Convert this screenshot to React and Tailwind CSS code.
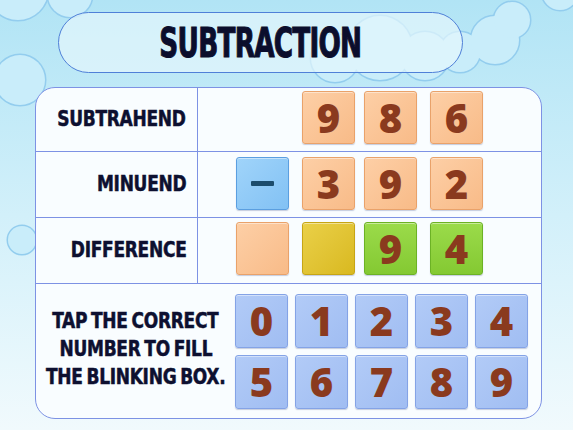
import React from "react";

const TILE_TONES = {
  peach: "bg-linear-to-br from-[#fdcfa6] to-[#f8bb88] border-[#e9a26a]",
  sky: "bg-linear-to-br from-[#a0d4fa] to-[#82c1f4] border-[#5b9fe0]",
  gold: "bg-linear-to-br from-[#ead047] to-[#d9b91e] border-[#c6a515]",
  lime: "bg-linear-to-b from-[#9bdb4a] to-[#84c932] border-[#6cb225]",
  pad: "bg-linear-to-br from-[#b2cbf7] to-[#a0bdf2] border-[#84a3e6]",
};

const Tile = ({ tone, children, className = "" }) => (
  <div
    className={`w-[53px] h-[53px] rounded-[3px] border flex items-center justify-center shadow-[0_1px_1px_rgba(40,60,120,0.25),inset_0_1px_0_rgba(255,255,255,0.45)] ${TILE_TONES[tone]} ${className}`}
  >
    {children}
  </div>
);

const Digit = ({ n }) => (
  <span className="font-['Open_Sans',sans-serif] font-extrabold text-[40px] leading-none text-[#8a3a1e]">
    {n}
  </span>
);

// condensed heavy caption font used for the row names
const Label = ({ children, className = "" }) => (
  <span
    className={`inline-block whitespace-nowrap font-['DejaVu_Sans_Condensed','DejaVu_Sans',sans-serif] font-bold text-[21px] tracking-[-0.3px] [word-spacing:-2px] text-[#0d1030] [-webkit-text-stroke:0.5px_#0d1030] scale-x-[0.9] ${className}`}
  >
    {children}
  </span>
);

const cloudDots = [
  [20, 80, 25],
  [18, -10, 30],
  [70, -5, 22],
  [22, 240, 14],
  [335, 58, 24],
  [380, 48, 32],
  [425, 56, 24],
  [460, 52, 20],
  [495, 40, 24],
  [512, 20, 18],
  [560, -8, 18],
];

const Clouds = () => (
  <svg className="absolute inset-0" width="573" height="430" viewBox="0 0 573 430">
    <g fill="none" stroke="#93cdee" strokeWidth="3">
      {cloudDots.map(([x, y, r], i) => (
        <circle key={i} cx={x} cy={y} r={r} />
      ))}
    </g>
    <g fill="#c9edfa">
      {cloudDots.map(([x, y, r], i) => (
        <circle key={i} cx={x} cy={y} r={r} />
      ))}
    </g>
  </svg>
);

export default function App() {
  const pad = [0, 1, 2, 3, 4, 5, 6, 7, 8, 9];

  return (
    <div className="relative w-[573px] h-[430px] overflow-hidden bg-linear-to-b from-[#b1e4f5] via-[#d2f0fa] to-[#f1fafd]">
      <Clouds />
      <div className="relative flex flex-col">
        <div className="ml-[58px] mt-[12px] w-[405px] h-[61px] rounded-full border border-[#4f80d8] bg-[#e4f6fc]/70 flex items-center justify-center">
          <h1 className="font-['DejaVu_Sans_Condensed','DejaVu_Sans',sans-serif] font-bold text-[40px] leading-none tracking-[-1px] text-[#0b0e2c] [-webkit-text-stroke:1px_#0b0e2c] scale-x-[0.73]">
            SUBTRACTION
          </h1>
        </div>

        <div className="ml-[35px] mt-[14px] w-[507px] h-[332px] rounded-[20px] border border-[#7d92e4] bg-[#f9fdff] flex flex-col overflow-hidden">
          <div className="flex h-[64px] border-b border-[#7d92e4]">
            <div className="w-[162px] border-r border-[#7d92e4] flex items-center justify-end pr-[11px]">
              <Label className="origin-right">SUBTRAHEND</Label>
            </div>
            <div className="flex items-start pt-[3px] pl-[104px]">
              <Tile tone="peach"><Digit n={9} /></Tile>
              <Tile tone="peach" className="ml-[9px]"><Digit n={8} /></Tile>
              <Tile tone="peach" className="ml-[13px]"><Digit n={6} /></Tile>
            </div>
          </div>

          <div className="flex h-[66px] border-b border-[#7d92e4]">
            <div className="w-[162px] border-r border-[#7d92e4] flex items-center justify-end pr-[11px]">
              <Label className="origin-right">MINUEND</Label>
            </div>
            <div className="flex items-start pt-[5px] pl-[38px]">
              <Tile tone="sky">
                <span className="w-[23px] h-[5px] rounded-[1px] bg-[#1c4c6c]" />
              </Tile>
              <Tile tone="peach" className="ml-[13px]"><Digit n={3} /></Tile>
              <Tile tone="peach" className="ml-[9px]"><Digit n={9} /></Tile>
              <Tile tone="peach" className="ml-[13px]"><Digit n={2} /></Tile>
            </div>
          </div>

          <div className="flex h-[66px] border-b border-[#7d92e4]">
            <div className="w-[162px] border-r border-[#7d92e4] flex items-center justify-end pr-[11px]">
              <Label className="origin-right">DIFFERENCE</Label>
            </div>
            <div className="flex items-start pt-[4px] pl-[38px]">
              <Tile tone="peach" />
              <Tile tone="gold" className="ml-[13px]" />
              <Tile tone="lime" className="ml-[9px]"><Digit n={9} /></Tile>
              <Tile tone="lime" className="ml-[13px]"><Digit n={4} /></Tile>
            </div>
          </div>

          <div className="flex flex-1 items-center">
            <div className="w-[199px] flex flex-col items-center leading-[28px] pb-[4px]">
              <Label>TAP THE CORRECT</Label>
              <Label>NUMBER TO FILL</Label>
              <Label>THE BLINKING BOX.</Label>
            </div>
            <div className="grid grid-cols-5 gap-[7px]">
              {pad.map((n) => (
                <Tile key={n} tone="pad" className="h-[54px]">
                  <Digit n={n} />
                </Tile>
              ))}
            </div>
          </div>
        </div>
      </div>
    </div>
  );
}
